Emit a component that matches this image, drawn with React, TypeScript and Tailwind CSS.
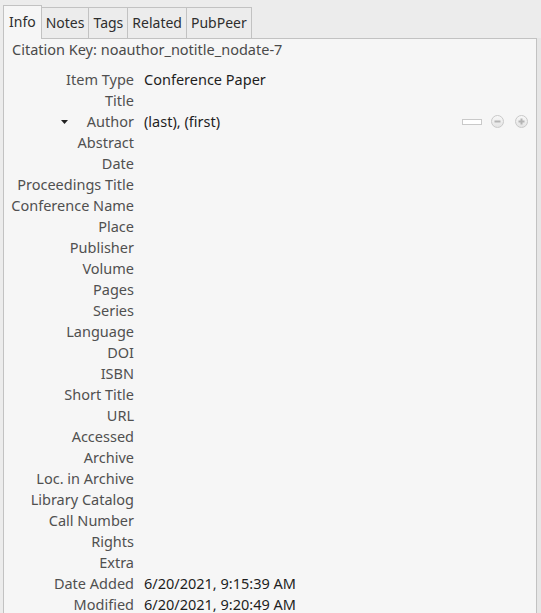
import React from 'react';

const fields: { label: string; value?: string }[] = [
  { label: 'Item Type', value: 'Conference Paper' },
  { label: 'Title' },
  { label: 'Author', value: '(last), (first)' },
  { label: 'Abstract' },
  { label: 'Date' },
  { label: 'Proceedings Title' },
  { label: 'Conference Name' },
  { label: 'Place' },
  { label: 'Publisher' },
  { label: 'Volume' },
  { label: 'Pages' },
  { label: 'Series' },
  { label: 'Language' },
  { label: 'DOI' },
  { label: 'ISBN' },
  { label: 'Short Title' },
  { label: 'URL' },
  { label: 'Accessed' },
  { label: 'Archive' },
  { label: 'Loc. in Archive' },
  { label: 'Library Catalog' },
  { label: 'Call Number' },
  { label: 'Rights' },
  { label: 'Extra' },
  { label: 'Date Added', value: '6/20/2021, 9:15:39 AM' },
  { label: 'Modified', value: '6/20/2021, 9:20:49 AM' },
];

const tabs = ['Info', 'Notes', 'Tags', 'Related', 'PubPeer'];

const RoundButton = ({ plus }: { plus?: boolean }) => (
  <div className="w-[13px] h-[13px] rounded-full border border-[#c9c9c9] bg-gradient-to-b from-[#f8f8f8] to-[#e4e4e4] flex items-center justify-center">
    <svg width="9" height="9" viewBox="0 0 9 9">
      <rect x="1.5" y="3.5" width="6" height="2" fill="#b4b4b4" />
      {plus && <rect x="3.5" y="1.5" width="2" height="6" fill="#b4b4b4" />}
    </svg>
  </div>
);

export default function App() {
  return (
    <div
      className="w-[541px] h-[613px] bg-[#ececec] overflow-hidden flex flex-col text-[14.5px]"
      style={{ fontFamily: '"Noto Sans", "Open Sans", sans-serif' }}
    >
      {/* Tabs */}
      <div className="flex items-end pl-[3px] pt-[4px] h-[38px] text-[14px]">
        {tabs.map((t, i) =>
          i === 0 ? (
            <div
              key={t}
              className="h-[34px] px-[5px] border border-b-0 border-[#c2c2c2] bg-[#f6f6f6] text-[#2e2e2e] leading-[32px] relative z-10 -mb-px"
            >
              {t}
            </div>
          ) : (
            <div
              key={t}
              className="h-[31px] px-[4px] border border-l-0 border-b-0 border-[#c2c2c2] bg-[#ececec] text-[#2e2e2e] leading-[29px]"
            >
              {t}
            </div>
          )
        )}
      </div>

      {/* Panel */}
      <div className="flex flex-1 min-h-0">
        <div className="ml-[3px] w-[534px] border border-b-0 border-[#c2c2c2] bg-[#f6f6f6]">
          <div className="h-[21px] leading-[21px] pl-[8px] text-[#4a4a4a]">
            Citation Key: noauthor_notitle_nodate-7
          </div>
          <div className="mt-[9px] flex flex-col">
            {fields.map((f) => (
              <div key={f.label} className="flex h-[21px] items-center">
                <div className="w-[130px] shrink-0 flex items-center justify-end text-[#505050] whitespace-nowrap">
                  {f.label === 'Author' && (
                    <svg width="7" height="4" viewBox="0 0 7 4" className="mr-[19px]">
                      <path d="M0 0 L7 0 L3.5 4 Z" fill="#222" />
                    </svg>
                  )}
                  {f.label}
                </div>
                <div className="ml-[10px] flex-1 flex items-center text-[#1e1e1e] whitespace-nowrap pr-[8px]">
                  <span>{f.value ?? ''}</span>
                  {f.label === 'Author' && (
                    <div className="ml-auto flex items-center">
                      <div className="w-[20px] h-[6px] bg-white border border-[#c9c9c9] mr-[9px]" />
                      <RoundButton />
                      <div className="w-[11px]" />
                      <RoundButton plus />
                    </div>
                  )}
                </div>
              </div>
            ))}
          </div>
        </div>
        <div className="flex-1 bg-[#e6e6e6]" />
      </div>
    </div>
  );
}
